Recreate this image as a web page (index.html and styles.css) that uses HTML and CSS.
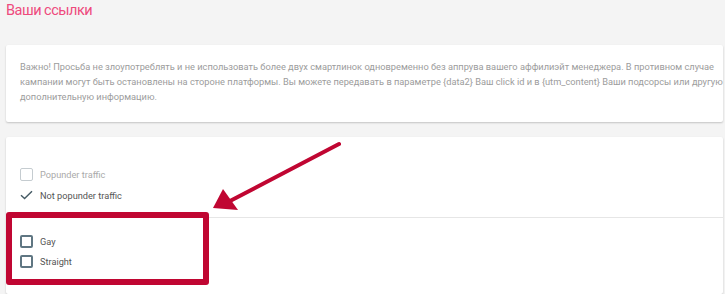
FILE: index.html
```html
<!DOCTYPE html>
<html lang="ru">
<head>
<meta charset="utf-8">
<title>Ваши ссылки</title>
<link rel="stylesheet" href="styles.css">
</head>
<body>
<div class="page">
  <h1 class="title">Ваши ссылки</h1>
  <div class="card notice">
    <p>Важно! Просьба не злоупотреблять и не использовать более двух смартлинок одновременно без аппрува вашего аффилиэйт менеджера. В противном случае кампании могут быть остановлены на стороне платформы. Вы можете передавать в параметре {data2} Ваш click id и в {utm_content} Ваши подсорсы или другую дополнительную информацию.</p>
  </div>
  <div class="card options">
    <div class="group first">
      <label class="opt disabled"><span class="box"></span><span>Popunder traffic</span></label>
      <label class="opt checked"><span class="tick"><svg width="13" height="10" viewBox="0 0 13 10"><path d="M1 5.2 L4.6 8.6 L12 1.2" fill="none" stroke="#455a64" stroke-width="1.4"/></svg></span><span>Not popunder traffic</span></label>
    </div>
    <div class="group second">
      <label class="opt"><span class="box dark"></span><span>Gay</span></label>
      <label class="opt"><span class="box dark"></span><span>Straight</span></label>
    </div>
  </div>
  <div class="highlight"></div>
  <svg class="arrow" width="140" height="80" viewBox="0 0 140 80">
    <line x1="129" y1="9" x2="20" y2="66" stroke="#c00632" stroke-width="4" stroke-linecap="round"/>
    <polygon points="3,73 13,54 28,75" fill="#c00632"/>
  </svg>
</div>
</body>
</html>
```
FILE: styles.css
```css
html, body {
  margin: 0;
  padding: 0;
  background: #f4f4f4;
}
body {
  font-family: Roboto, "Liberation Sans", Arial, sans-serif;
  width: 725px;
  height: 294px;
  overflow: hidden;
}
.page {
  position: relative;
  padding: 0 2px 0 6px;
}
.title {
  margin: 0;
  padding-top: 1px;
  height: 44px;
  font-size: 14.5px;
  letter-spacing: -0.5px;
  line-height: 20px;
  font-weight: 400;
  color: #ee4a7d;
}
.card {
  background: #fff;
  box-shadow: 0 1px 2px rgba(0,0,0,0.2);
  border-radius: 2px;
}
.notice {
  padding: 14px 0 18px 14px;
  margin-bottom: 15px;
}
.notice p {
  margin: 0 -2px 0 0;
  font-size: 9.25px;
  line-height: 15px;
  color: #9c9c9c;
}
.options {
  height: 157px;
}
.group {
  display: flex;
  flex-direction: column;
  gap: 7px;
  padding-left: 14px;
}
.group.first {
  padding-top: 30px;
  padding-bottom: 15px;
  border-bottom: 1px solid #e6e6e6;
}
.group.second {
  padding-top: 16px;
  gap: 6px;
}
.opt {
  display: flex;
  align-items: center;
  gap: 7px;
  height: 14px;
  font-size: 9.2px;
  color: #555;
}
.opt.disabled {
  color: #aaa;
}
.box {
  width: 13px;
  height: 13px;
  box-sizing: border-box;
  border: 1.5px solid #c5ccd0;
  border-radius: 2px;
}
.box.dark {
  border: 2px solid #5f7682;
}
.tick {
  width: 13px;
  height: 13px;
  display: flex;
  align-items: center;
}
.highlight {
  position: absolute;
  left: 6px;
  top: 212px;
  width: 191px;
  height: 61px;
  border: 6px solid #c00632;
  border-radius: 3px;
}
.arrow {
  position: absolute;
  left: 210px;
  top: 135px;
}
```
